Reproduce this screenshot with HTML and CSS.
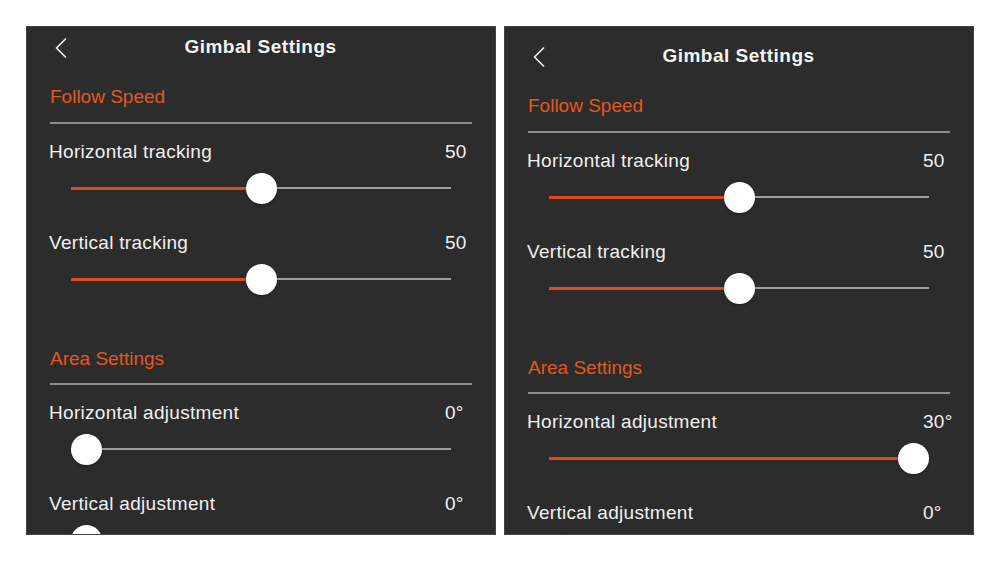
FILE: index.html
```html
<!DOCTYPE html>
<html lang="en">
<head>
	<meta charset="UTF-8">
	<title>Gimbal Settings</title>
	<link rel="stylesheet" href="styles.css">
</head>
<body>
	<div class="pair">
		<div class="screen">
			<div class="nav">
				<span class="back"><svg width="12" height="20" viewBox="0 0 12 20"><polyline points="10.5,1 1.5,10 10.5,19" fill="none" stroke="#ececec" stroke-width="1.7" stroke-linecap="round" stroke-linejoin="round"/></svg></span>
				<h1 class="title">Gimbal Settings</h1>
				<span></span>
			</div>
			<h2 class="group">Follow Speed</h2>
			<div class="item">
				<div class="item-head"><span class="label">Horizontal tracking</span><span class="value">50</span></div>
				<div class="slider" style="--v:0.5"><div class="fill"></div><div class="knob"></div></div>
			</div>
			<div class="item">
				<div class="item-head"><span class="label">Vertical tracking</span><span class="value">50</span></div>
				<div class="slider" style="--v:0.5"><div class="fill"></div><div class="knob"></div></div>
			</div>
			<h2 class="group group-2">Area Settings</h2>
			<div class="item">
				<div class="item-head"><span class="label">Horizontal adjustment</span><span class="value">0°</span></div>
				<div class="slider" style="--v:0"><div class="fill"></div><div class="knob"></div></div>
			</div>
			<div class="item">
				<div class="item-head"><span class="label">Vertical adjustment</span><span class="value">0°</span></div>
				<div class="slider" style="--v:0"><div class="fill"></div><div class="knob"></div></div>
			</div>
		</div>
		<div class="screen screen-low">
			<div class="nav">
				<span class="back"><svg width="12" height="20" viewBox="0 0 12 20"><polyline points="10.5,1 1.5,10 10.5,19" fill="none" stroke="#ececec" stroke-width="1.7" stroke-linecap="round" stroke-linejoin="round"/></svg></span>
				<h1 class="title">Gimbal Settings</h1>
				<span></span>
			</div>
			<h2 class="group">Follow Speed</h2>
			<div class="item">
				<div class="item-head"><span class="label">Horizontal tracking</span><span class="value">50</span></div>
				<div class="slider" style="--v:0.5"><div class="fill"></div><div class="knob"></div></div>
			</div>
			<div class="item">
				<div class="item-head"><span class="label">Vertical tracking</span><span class="value">50</span></div>
				<div class="slider" style="--v:0.5"><div class="fill"></div><div class="knob"></div></div>
			</div>
			<h2 class="group group-2">Area Settings</h2>
			<div class="item">
				<div class="item-head"><span class="label">Horizontal adjustment</span><span class="value">30°</span></div>
				<div class="slider" style="--v:1"><div class="fill"></div><div class="knob"></div></div>
			</div>
			<div class="item">
				<div class="item-head"><span class="label">Vertical adjustment</span><span class="value">0°</span></div>
				<div class="slider" style="--v:0"><div class="fill"></div><div class="knob"></div></div>
			</div>
		</div>
	</div>
</body>
</html>
```
FILE: styles.css
```css
* { margin:0;padding:0;box-sizing:border-box; }
body { background:#fff;font-family:"Liberation Sans", Arial, sans-serif;color:#f0f0f0; }
.pair { display:flex;gap:8px;padding:26px 0 0 26px; }
.screen { width:470px;height:509px;background:#2c2c2c;border:1px solid #444;overflow:hidden;padding:0 23px 0 22px; }
.screen-low { padding-top:9px; }
.nav { display:grid;grid-template-columns:1fr auto 1fr;align-items:center;height:39px; }
.back { display:flex;padding-left:6px;padding-top:1px; }
.title { font-size:19px;font-weight:bold;color:#f4f4f4;line-height:40px;letter-spacing:0.5px; }
.group { font-size:19px;font-weight:normal;color:#e2581f;line-height:22px;margin-top:20px;padding-bottom:14px;border-bottom:2px solid #8c8c8c;margin-left:1px; }
.group-2 { margin-top:53px;padding-bottom:13px; }
.item { margin-top:17px; }
.item + .item { margin-top:28px; }
.item-head { display:flex;line-height:22px;font-size:19px;letter-spacing:0.3px; }
.label { flex:1; }
.value { width:27px;flex-shrink:0;white-space:nowrap; }
.slider { position:relative;height:32px;margin:9px 21px 0 22px; }
.slider::before { content:"";position:absolute;left:0;right:0;top:15px;height:2px;background:#a0a0a0; }
.fill { position:absolute;left:0;top:14.5px;height:3px;background:#e0491c;width:calc(15.5px + var(--v) * (100% - 31px)); }
.knob { position:absolute;top:0.5px;width:31px;height:31px;border-radius:50%;background:#fff;box-shadow:0 1px 3px rgba(0,0,0,0.35);left:calc(var(--v) * (100% - 31px)); }
```
